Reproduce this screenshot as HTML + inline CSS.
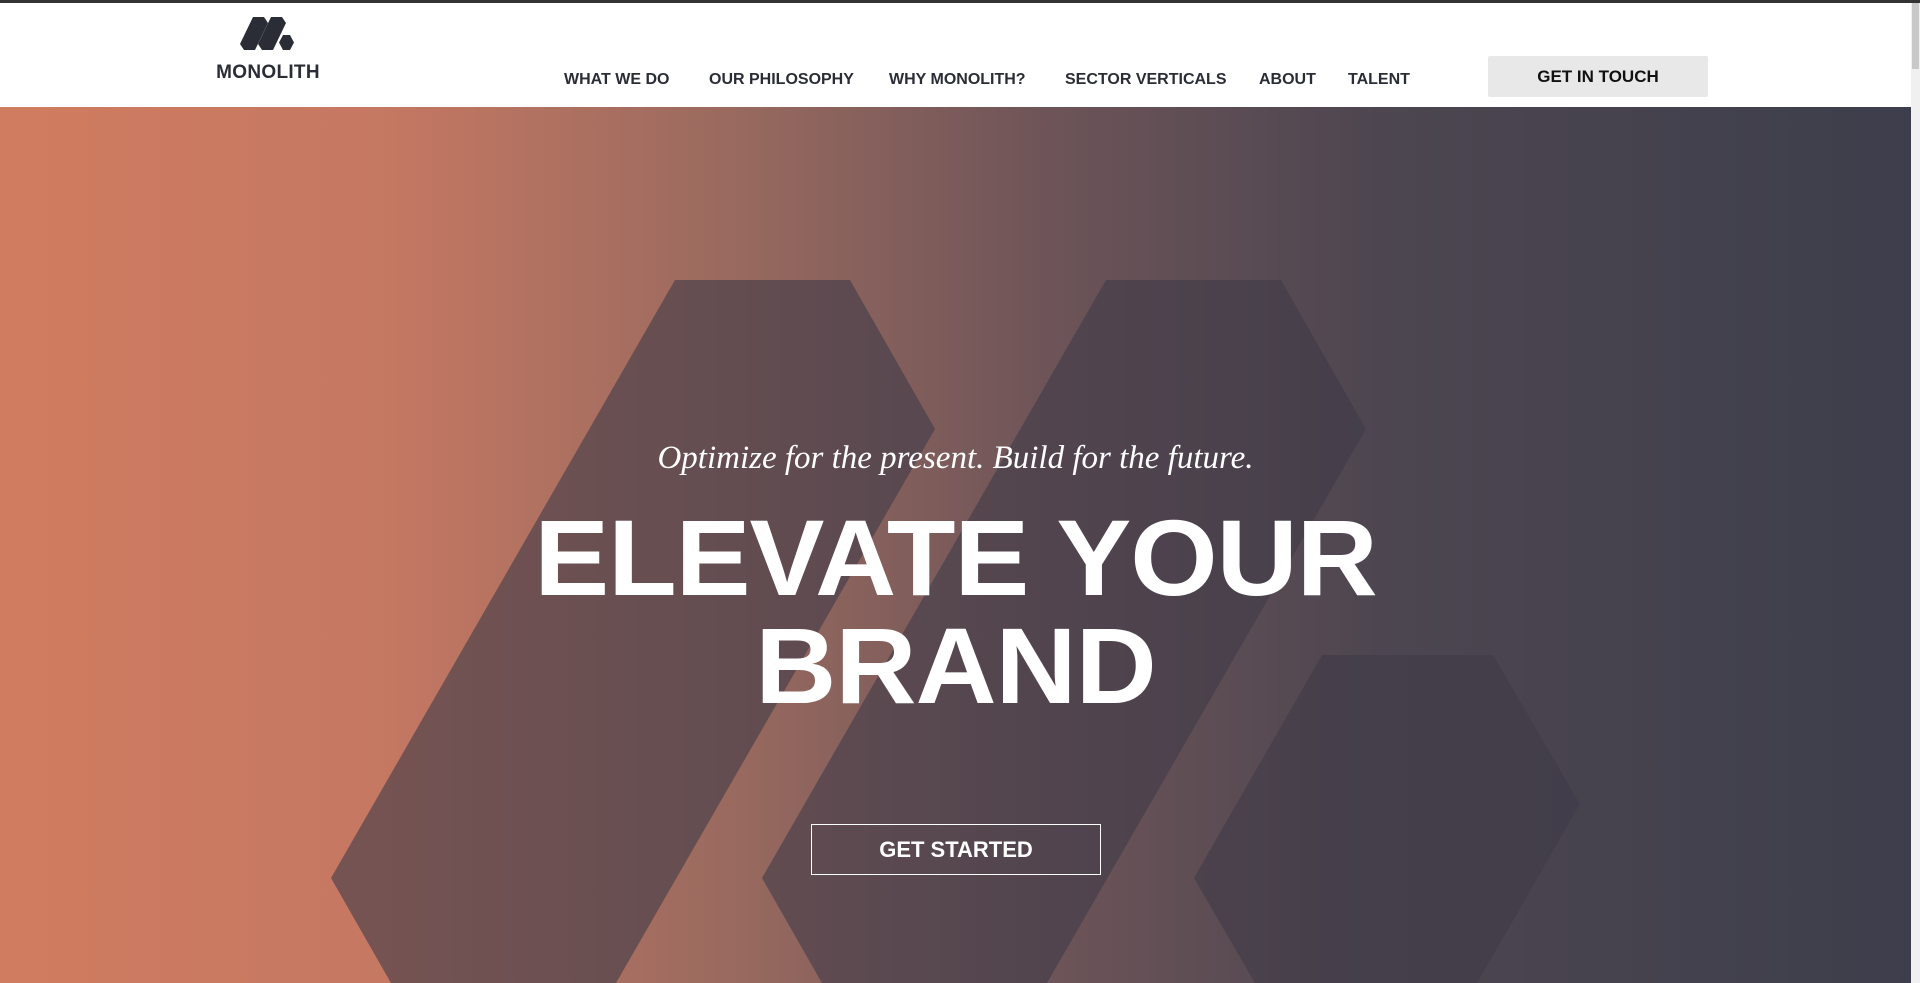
<!DOCTYPE html>
<html><head><meta charset="utf-8"><style>
*{margin:0;padding:0;box-sizing:border-box}
html,body{width:1920px;height:983px;overflow:hidden;background:#fff;font-family:"Liberation Sans",sans-serif}
.top{position:absolute;left:0;top:0;width:1920px;height:3px;background:#333}
.scroll{position:absolute;right:0;top:3px;width:9px;height:980px;background:#f0f0f0}
.scroll div{position:absolute;left:1px;top:0;width:7px;height:66px;background:#c8c8c8}
header{position:absolute;left:0;top:3px;width:1911px;height:104px;background:#fff}
.logo{position:absolute;left:212px;top:14px;width:112px;text-align:center}
.logo span{display:block;font-weight:bold;font-size:19px;color:#2b2d36;letter-spacing:0.3px;margin-top:11px}
nav{position:absolute;top:68px;left:0}
nav a{position:absolute;white-space:nowrap;font-size:16px;font-weight:bold;color:#2b2d36;text-decoration:none}
.cta{position:absolute;left:1488px;top:53px;width:220px;height:41px;background:#e8e8e8;border-radius:2px;text-align:center;line-height:41px;font-weight:bold;font-size:17px;color:#111}
.hero{position:absolute;left:0;top:107px;width:1911px;height:876px;background:linear-gradient(90deg,#d07c60 0%,#c57862 20%,#9a6a5f 38%,#6d5458 55%,#4d4650 72%,#3d3e4c 100%);overflow:hidden}
.hero svg{position:absolute;left:0;top:0}
.sub{position:absolute;left:0;width:1911px;top:333px;text-align:center;font-family:"Liberation Serif",serif;font-style:italic;font-size:33px;color:#fff}
h1{position:absolute;left:0;width:1911px;top:397px;text-align:center;font-weight:bold;font-size:108px;line-height:108px;color:#fff;letter-spacing:-1px;transform:scaleX(1.04)}
.btn{position:absolute;left:811px;top:717px;width:290px;height:51px;border:1px solid #fff;color:#fff;text-align:center;line-height:49px;font-weight:bold;font-size:22px}
</style></head><body>
<div class="top"></div>
<header>
<div class="logo">
<svg width="56" height="34" viewBox="0 0 56 34" style="display:block;margin:0 auto"><g fill="#2b2d36"><polygon points="13,0 24,0 28,6 15,33 4,33 0,27"/><polygon points="31,0 42,0 46,6 33,33 22,33 18,27"/><polygon points="43,18 50,18 54,25.5 50,33 43,33 39,25.5"/></g></svg>
<span>MONOLITH</span></div>
<nav>
<a style="left:564px">WHAT WE DO</a>
<a style="left:709px">OUR PHILOSOPHY</a>
<a style="left:889px">WHY MONOLITH?</a>
<a style="left:1065px">SECTOR VERTICALS</a>
<a style="left:1259px">ABOUT</a>
<a style="left:1348px">TALENT</a>
</nav>
<div class="cta">GET IN TOUCH</div>
</header>
<div class="hero">
<svg width="1911" height="876" viewBox="0 0 1911 876">
<g fill="#3f3a48" fill-opacity="0.6">
<polygon points="675,173 850,173 935,322 616,876 391,876 331,771"/>
<polygon points="1106,173 1281,173 1366,322 1047,876 822,876 762,771"/>
<polygon points="1322,548 1493,548 1580,697 1477,876 1255,876 1194,771"/>
</g>
</svg>
<div class="sub">Optimize for the present. Build for the future.</div>
<h1>ELEVATE YOUR<br>BRAND</h1>
<div class="btn">GET STARTED</div>
</div>
<div class="scroll"><div></div></div>
</body></html>
